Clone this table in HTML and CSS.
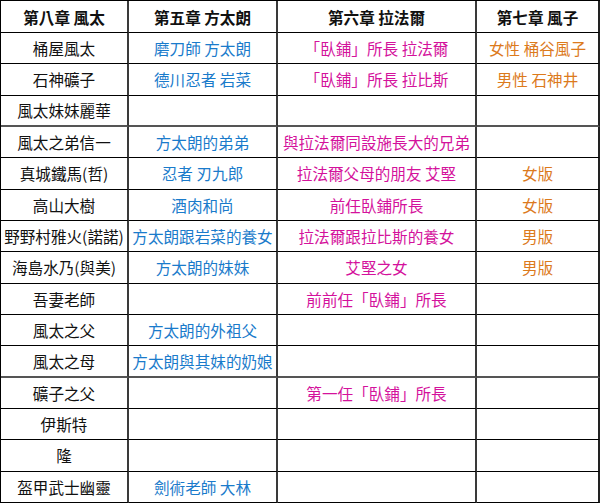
FILE: index.html
```html
<!DOCTYPE html>
<html lang="zh-Hant">
<head>
<meta charset="utf-8">
<title>角色對照表</title>
<link rel="stylesheet" href="styles.css">
</head>
<body>
<table class="chart">
  <colgroup>
    <col class="c1"><col class="c2"><col class="c3"><col class="c4">
  </colgroup>
  <thead>
    <tr class="head">
      <th>第八章 風太</th>
      <th>第五章 方太朗</th>
      <th>第六章 拉法爾</th>
      <th>第七章 風子</th>
    </tr>
  </thead>
  <tbody>
    <tr><td>桶屋風太</td><td class="blue">磨刀師 方太朗</td><td class="pink">「臥鋪」所長 拉法爾</td><td class="orange">女性 桶谷風子</td></tr>
    <tr><td>石神礦子</td><td class="blue">德川忍者 岩菜</td><td class="pink">「臥鋪」所長 拉比斯</td><td class="orange">男性 石神井</td></tr>
    <tr class="thick"><td>風太妹妹麗華</td><td></td><td></td><td></td></tr>
    <tr><td>風太之弟信一</td><td class="blue">方太朗的弟弟</td><td class="pink">與拉法爾同設施長大的兄弟</td><td></td></tr>
    <tr><td>真城鐵馬(哲)</td><td class="blue">忍者 刃九郎</td><td class="pink">拉法爾父母的朋友 艾堅</td><td class="orange">女版</td></tr>
    <tr><td>高山大樹</td><td class="blue">酒肉和尚</td><td class="pink">前任臥鋪所長</td><td class="orange">女版</td></tr>
    <tr><td>野野村雅火(諾諾)</td><td class="blue">方太朗跟岩菜的養女</td><td class="pink">拉法爾跟拉比斯的養女</td><td class="orange">男版</td></tr>
    <tr><td>海島水乃(與美)</td><td class="blue">方太朗的妹妹</td><td class="pink">艾堅之女</td><td class="orange">男版</td></tr>
    <tr><td>吾妻老師</td><td></td><td class="pink">前前任「臥鋪」所長</td><td></td></tr>
    <tr><td>風太之父</td><td class="blue">方太朗的外祖父</td><td></td><td></td></tr>
    <tr class="thick"><td>風太之母</td><td class="blue">方太朗與其妹的奶娘</td><td></td><td></td></tr>
    <tr><td>礦子之父</td><td></td><td class="pink">第一任「臥鋪」所長</td><td></td></tr>
    <tr><td>伊斯特</td><td></td><td></td><td></td></tr>
    <tr><td>隆</td><td></td><td></td><td></td></tr>
    <tr><td>盔甲武士幽靈</td><td class="blue">劍術老師 大林</td><td></td><td></td></tr>
  </tbody>
</table>
</body>
</html>
```

FILE: styles.css
```css
html, body {
  margin: 0;
  padding: 0;
  background: #ffffff;
}

.chart {
  border-collapse: separate;
  border-spacing: 0;
  table-layout: fixed;
  width: 599px;
  border-top: 1px solid #000;
  border-left: 1px solid #000;
  font-family: "Noto Sans CJK TC", "Noto Sans CJK SC", sans-serif;
  font-size: 15.6px;
  line-height: 18px;
  color: #111;
}

.c1 { width: 128px; }
.c2 { width: 149px; }
.c3 { width: 199px; }
.c4 { width: 123px; }

.chart th,
.chart td {
  padding: 0;
  text-align: center;
  vertical-align: middle;
  white-space: nowrap;
  overflow: hidden;
  border-bottom: 1px solid #000;
  border-right: 2px solid #3a3a3a;
}

.chart th:last-child,
.chart td:last-child {
  border-right: 2px solid #222;
}

.head {
  height: 32px;
}

.chart th {
  font-weight: bold;
  color: #111;
}

.chart tbody tr {
  height: 31.33px;
}

.chart tbody tr.thick td {
  border-bottom: 2px solid #555;
}

.blue { color: #1a7bcb; }
.pink { color: #d4129c; }
.orange { color: #dc7a1c; }
```
